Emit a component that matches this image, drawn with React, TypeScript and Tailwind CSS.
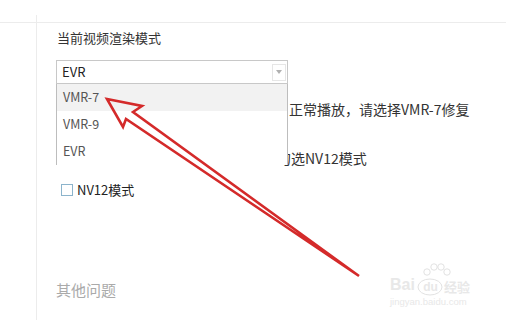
import { useState } from 'react'

const FONT = "font-['Microsoft_YaHei','Noto_Sans_CJK_SC',sans-serif]"

const OPTIONS = ['VMR-7', 'VMR-9', 'EVR']

function Arrow() {
  return (
    <svg className="absolute left-0 top-0 z-30 pointer-events-none" width="506" height="320" viewBox="0 0 506 320">
      <path
        d="M107 99 L142 106 L133 112 L359 276 L126 119 L123 127 Z"
        fill="none"
        stroke="#d42a2a"
        strokeWidth="2.6"
        strokeLinejoin="miter"
      />
    </svg>
  )
}

function Watermark() {
  return (
    <div className="absolute left-[390px] top-[263px] w-[92px] pointer-events-none select-none text-[#e8e8e8]">
      <svg width="92" height="44" viewBox="0 0 92 44" className="absolute left-0 top-0">
        <g fill="none" stroke="#e2e2e2" strokeWidth="1">
          <circle cx="37" cy="9" r="3.2" />
          <circle cx="44" cy="4" r="3.2" />
          <circle cx="51" cy="4" r="3.2" />
          <circle cx="57" cy="9" r="3.2" />
          <ellipse cx="40" cy="24" rx="12" ry="8" />
        </g>
      </svg>
      <div className="relative flex items-end h-[30px] text-[16px] font-['Liberation_Sans',sans-serif] font-bold leading-none">
        <span className="w-[27px]">Bai</span>
        <span className="w-[27px] text-center text-[12px]">du</span>
        <span className={`${FONT} text-[13px]`}>经验</span>
      </div>
      <div className="relative mt-[4px] text-[9.5px] leading-none font-['Liberation_Sans',sans-serif]">jingyan.baidu.com</div>
    </div>
  )
}

export default function App() {
  const [value] = useState('EVR')

  return (
    <div className={`relative w-[506px] h-[320px] bg-white overflow-hidden text-[#333] ${FONT}`}>
      <div className="h-[23px] border-b border-[#ececec] flex">
        <div className="w-[37px] mt-[15px] border-r border-[#ececec]" />
      </div>
      <div className="flex h-[297px]">
        <div className="w-[37px] border-r border-[#ececec] shrink-0" />
        <div className="flex-1 pl-[19px] pt-[6px]">
          <div className="text-[13px] leading-[18px] pl-[1px]">当前视频渲染模式</div>

          <div className="relative z-20 mt-[13px] w-[232px]">
            <div className="h-[24px] border border-[#c8c8c8] bg-white flex items-center justify-between pl-[5px] pr-[1px]">
              <span className="text-[13px] text-[#222]">{value}</span>
              <span className="w-[14px] h-[17px] border border-[#e6e6e6] flex items-center justify-center">
                <span className="w-0 h-0 border-l-[3px] border-r-[3px] border-t-[4px] border-l-transparent border-r-transparent border-t-[#b0b0b0]" />
              </span>
            </div>
            <ul className="absolute left-0 top-[24px] w-[232px] h-[81px] bg-white border border-[#bdbdbd] border-t-0">
              {OPTIONS.map((o, i) => (
                <li
                  key={o}
                  className={`h-[27px] flex items-center pl-[6px] text-[12.5px] text-[#555] ${i === 0 ? 'bg-[#f2f2f2]' : 'bg-white'}`}
                >
                  {o}
                </li>
              ))}
            </ul>
          </div>

          <div className="relative z-0 mt-[15px] pl-[233px] text-[14px] leading-[20px] whitespace-nowrap">
            正常播放，请选择VMR-7修复
          </div>
          <div className="relative z-0 mt-[29px] pl-[221px] text-[14px] leading-[20px] whitespace-nowrap">
            勾选NV12模式
          </div>

          <label className="mt-[12px] h-[20px] flex items-center gap-[4px] pl-[5px]">
            <span className="w-[12px] h-[12px] border border-[#8cb4cc] bg-white" />
            <span className="text-[13px] text-[#222]">NV12模式</span>
          </label>

          <div className="mt-[79px] text-[15px] leading-[22px] text-[#aaa]">其他问题</div>
        </div>
      </div>
      <Watermark />
      <Arrow />
    </div>
  )
}
